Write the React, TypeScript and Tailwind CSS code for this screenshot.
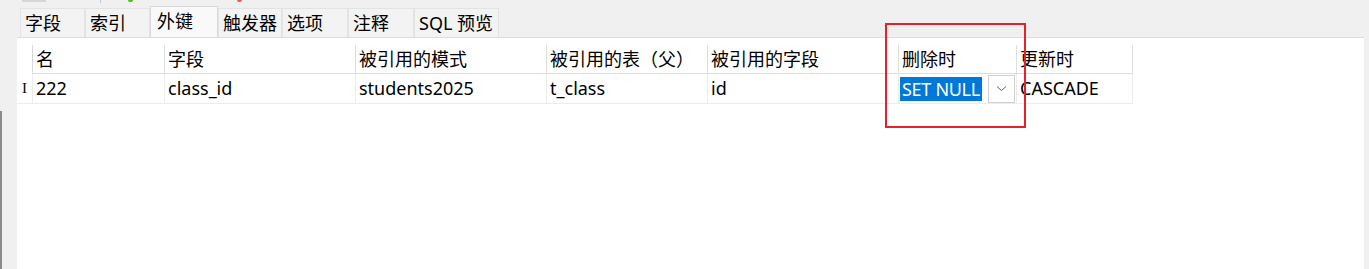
import React from "react";

const font = "font-['Noto_Sans','Noto_Sans_CJK_SC',sans-serif]";

const tabs = [
  { label: "字段", w: "w-[65px]" },
  { label: "索引", w: "w-[65px]" },
  { label: "外键", w: "w-[68px]", active: true },
  { label: "触发器", w: "w-[64px]" },
  { label: "选项", w: "w-[66px]" },
  { label: "注释", w: "w-[66px]" },
  { label: "SQL 预览", w: "w-[85px]" },
];

const cols = [
  { head: "名", value: "222", w: "w-[132px]" },
  { head: "字段", value: "class_id", w: "w-[191px]" },
  { head: "被引用的模式", value: "students2025", w: "w-[191px]" },
  { head: "被引用的表（父）", value: "t_class", w: "w-[161px]" },
  { head: "被引用的字段", value: "id", w: "w-[191px]" },
  { head: "删除时", value: "SET NULL", w: "w-[118px]", edit: true },
  { head: "更新时", value: "CASCADE", w: "w-[116px]" },
];

function Chevron() {
  return (
    <svg width="11" height="7" viewBox="0 0 11 7" fill="none">
      <path d="M1 1.5l4.5 4 4.5-4" stroke="#5f5f5f" strokeWidth="1" />
    </svg>
  );
}

export default function App() {
  return (
    <div className={`relative w-[1369px] h-[269px] overflow-hidden bg-[#f0f0f0] text-[18px] text-black ${font}`}>
      {/* clipped toolbar remnants */}
      <div className="flex h-[6px] items-start">
        <div className="ml-[22px] h-[2px] w-[24px] bg-[#d6d6d6]" />
        <div className="ml-[54px] h-[3px] w-px bg-[#c8c8c8]" />
        <div className="ml-[27px] h-[2px] w-[5px] rounded-b-full bg-[#4cbb17]" />
        <div className="ml-[104px] h-[2px] w-[5px] rounded-b-full bg-[#f25b4a]" />
      </div>

      {/* tabs */}
      <div className="ml-[20px] flex h-[31px] items-end">
        {tabs.map((t) =>
          t.active ? (
            <div
              key={t.label}
              className={`${t.w} h-[31px] border border-b-0 border-[#d9d9d9] bg-[#f9f9f9] px-[6px] leading-[28px]`}
            >
              {t.label}
            </div>
          ) : (
            <div
              key={t.label}
              className={`${t.w} h-[29px] border-l border-t border-r border-[#e3e3e3] bg-[#f3f3f3] px-[4px] leading-[29px]`}
            >
              {t.label}
            </div>
          )
        )}
      </div>

      <div className="flex h-[232px]">
        {/* left gutter */}
        <div className="w-[17px] pt-[74px]">
          <div className="h-full w-[2px] bg-[#8a8a8a]" />
        </div>

        {/* grid panel */}
        <div className="w-[1347px] border-t border-[#dcdcdc] bg-white pt-[7px]">
          <div className="flex h-[29px] leading-[28px]">
            <div className="w-[16px] border-r border-[#d9d9d9]" />
            {cols.map((c) => (
              <div key={c.head} className={`${c.w} border-r border-b border-[#dedede] pl-[3px]`}>
                {c.head}
              </div>
            ))}
          </div>
          <div className="flex h-[30px] leading-[28px]">
            <div className="flex w-[16px] items-center justify-center border-r border-b border-[#ececec]">
              <span className="font-['Liberation_Serif',serif] text-[15px] leading-none">I</span>
            </div>
            {cols.map((c) =>
              c.edit ? (
                <div key={c.head} className={`${c.w} flex items-center border-r border-b border-[#ececec] pl-[1px]`}>
                  <span className="h-[24px] bg-[#0078d7] px-[2px] leading-[24px] tracking-[-0.3px] text-white">
                    {c.value}
                  </span>
                  <div className="ml-[6px] flex h-[28px] w-[27px] items-center justify-center border border-[#cfcfcf] bg-white">
                    <Chevron />
                  </div>
                </div>
              ) : (
                <div key={c.head} className={`${c.w} border-r border-b border-[#ececec] pl-[3px]`}>
                  {c.value}
                </div>
              )
            )}
          </div>
        </div>
        <div className="flex-1" />
      </div>

      {/* red annotation box */}
      <div className="absolute left-[885px] top-[23px] h-[105px] w-[141px] border-2 border-[#e8202a]" />
    </div>
  );
}
